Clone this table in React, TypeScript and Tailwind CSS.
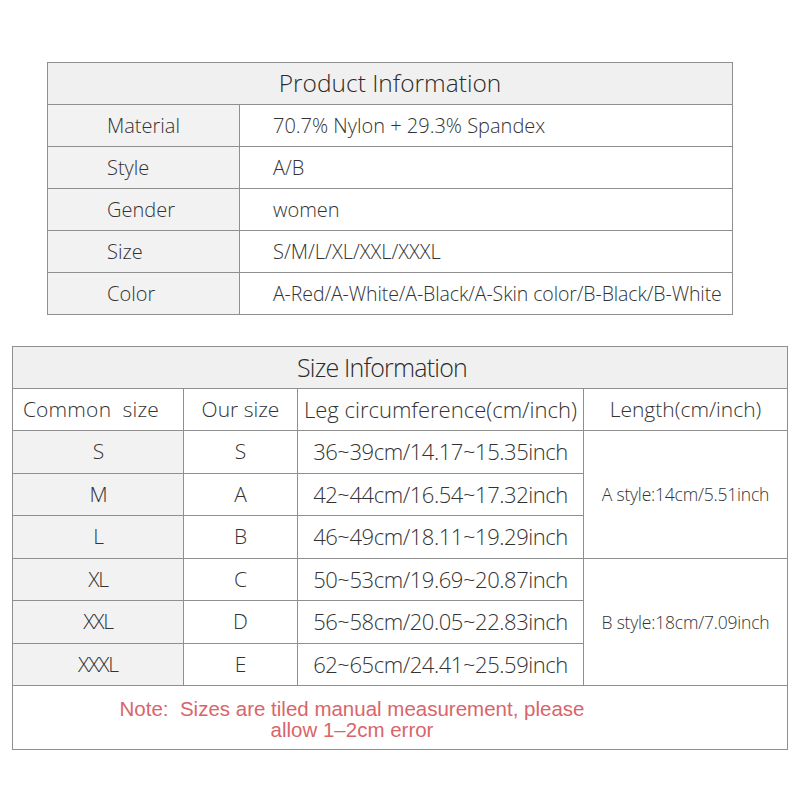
const productRows = [
  { label: 'Material', value: '70.7% Nylon + 29.3% Spandex', small: false },
  { label: 'Style', value: 'A/B', small: false },
  { label: 'Gender', value: 'women', small: false },
  { label: 'Size', value: 'S/M/L/XL/XXL/XXXL', small: false },
  { label: 'Color', value: 'A-Red/A-White/A-Black/A-Skin color/B-Black/B-White', small: true },
];

const sizeRows = [
  { common: 'S', ours: 'S', leg: '36~39cm/14.17~15.35inch' },
  { common: 'M', ours: 'A', leg: '42~44cm/16.54~17.32inch' },
  { common: 'L', ours: 'B', leg: '46~49cm/18.11~19.29inch' },
  { common: 'XL', ours: 'C', leg: '50~53cm/19.69~20.87inch' },
  { common: 'XXL', ours: 'D', leg: '56~58cm/20.05~22.83inch' },
  { common: 'XXXL', ours: 'E', leg: '62~65cm/24.41~25.59inch' },
];

const cell = 'border border-[#8f8f8f] p-0';

const App = () => {
  return (
    <main className="min-h-[800px] w-[800px] bg-white pt-[62px] text-[#333] font-light font-['Open_Sans',sans-serif]">
      <table className="ml-[47px] w-[686px] border-collapse table-fixed">
        <colgroup>
          <col className="w-[192px]" />
          <col />
        </colgroup>
        <tbody>
          <tr className="h-[42px] bg-[#f0f0f0]">
            <td colSpan={2} className={`${cell} text-center text-[24.5px] text-[#2b2b2b]`}>
              Product Information
            </td>
          </tr>
          {productRows.map((row) => (
            <tr key={row.label} className="h-[42px]">
              <td className={`${cell} bg-[#f2f2f2] pl-[59px] text-[20px]`}>{row.label}</td>
              <td className={`${cell} pl-[33px] ${row.small ? 'text-[19.5px] tracking-[-0.1px]' : 'text-[20px]'}`}>
                {row.value}
              </td>
            </tr>
          ))}
        </tbody>
      </table>

      <table className="ml-[12px] mt-[31px] w-[776px] border-collapse table-fixed">
        <colgroup>
          <col className="w-[171px]" />
          <col className="w-[114px]" />
          <col className="w-[286px]" />
          <col />
        </colgroup>
        <tbody>
          <tr className="h-[42px] bg-[#f0f0f0]">
            <td colSpan={4} className={`${cell} pr-[36px] text-center text-[25px] tracking-[-0.8px] text-[#2b2b2b]`}>
              Size Information
            </td>
          </tr>
          <tr className="h-[42px] text-center text-[21px]">
            <td className={`${cell} pr-[14px] tracking-[0.2px]`}>Common&nbsp; size</td>
            <td className={cell}>Our size</td>
            <td className={`${cell} text-[22px]`}>Leg circumference(cm/inch)</td>
            <td className={cell}>Length(cm/inch)</td>
          </tr>
          {sizeRows.map((row, index) => (
            <tr key={row.common} className="h-[42.5px] text-center text-[21px]">
              <td className={`${cell} bg-[#f2f2f2] tracking-[-1.2px]`}>{row.common}</td>
              <td className={cell}>{row.ours}</td>
              <td className={`${cell} text-[22px] tracking-[-0.45px]`}>{row.leg}</td>
              {index === 0 && (
                <td rowSpan={3} className={`${cell} text-[17.5px] tracking-[-0.2px]`}>
                  A style:14cm/5.51inch
                </td>
              )}
              {index === 3 && (
                <td rowSpan={3} className={`${cell} text-[17.5px] tracking-[-0.2px]`}>
                  B style:18cm/7.09inch
                </td>
              )}
            </tr>
          ))}
          <tr className="h-[64px]">
            <td colSpan={4} className={`${cell} pr-[96px] pt-[2px] text-center text-[20.5px] leading-[21px] font-normal text-[#d9656a] font-['Liberation_Sans',sans-serif]`}>
              Note:&nbsp; Sizes are tiled manual measurement, please
              <br />
              allow 1–2cm error
            </td>
          </tr>
        </tbody>
      </table>
    </main>
  );
};

export default App;
